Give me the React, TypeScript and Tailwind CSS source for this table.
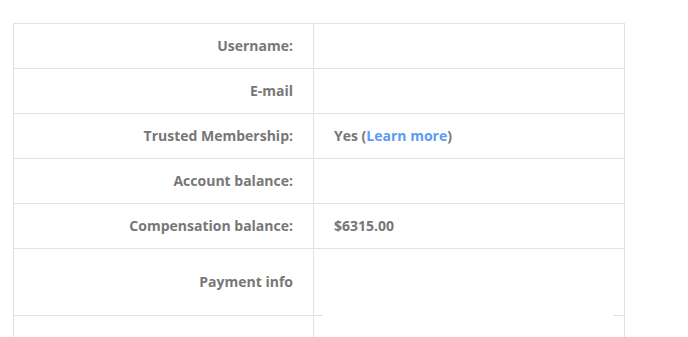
import React from 'react'

const rows = [
    { label: 'Username:', value: null },
    { label: 'E-mail', value: null },
    { label: 'Trusted Membership:', value: 'trusted' },
    { label: 'Account balance:', value: null },
    { label: 'Compensation balance:', value: '$6315.00' },
]

export default function App() {
    return (
        <div className="min-h-[337px] bg-white pt-[23px] pl-[13px] font-['Open_Sans',sans-serif] text-[14px] font-bold text-[#777]">
            <div className='w-[612px] border-l border-r border-t border-[#e2e2e2]'>
                {rows.map((r) => (
                    <div key={r.label} className='flex h-[45px] border-b border-[#e2e2e2]'>
                        <div className='w-[300px] flex items-center justify-end pr-[20px] pb-[2px] border-r border-[#e2e2e2]'>
                            {r.label}
                        </div>
                        <div className='flex-1 flex items-center pl-[20px] pb-[2px]'>
                            {r.value === 'trusted' ? (
                                <span>
                                    Yes (<a className='text-[#5b9cf5]'>Learn more</a>)
                                </span>
                            ) : (
                                r.value
                            )}
                        </div>
                    </div>
                ))}
                <div className='relative flex h-[67px] border-b border-[#e2e2e2]'>
                    <div className='w-[300px] flex items-center justify-end pr-[20px] pb-[2px] border-r border-[#e2e2e2]'>
                        Payment info
                    </div>
                    <div className='flex-1'></div>
                    <div className='absolute left-[309px] top-[60px] w-[290px] h-[10px] bg-white'></div>
                </div>
                <div className='flex h-[45px]'>
                    <div className='w-[300px] border-r border-[#e2e2e2]'></div>
                    <div className='flex-1'></div>
                </div>
            </div>
        </div>
    )
}
